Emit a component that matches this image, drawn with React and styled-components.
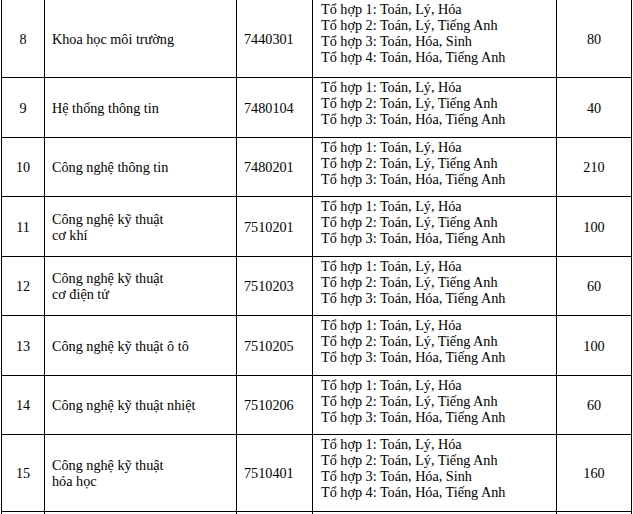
import React from "react";
import styled, { createGlobalStyle } from "styled-components";

const GlobalStyle = createGlobalStyle`
  html, body {
    margin: 0;
    padding: 0;
    background: #fff;
    overflow: hidden;
  }
`;

const combos3 = ["Toán, Lý, Hóa", "Toán, Lý, Tiếng Anh", "Toán, Hóa, Tiếng Anh"];
const combos4 = ["Toán, Lý, Hóa", "Toán, Lý, Tiếng Anh", "Toán, Hóa, Sinh", "Toán, Hóa, Tiếng Anh"];

const rows = [
  { no: 8, name: ["Khoa học môi trường"], code: "7440301", combos: combos4, quota: 80, h: 78 },
  { no: 9, name: ["Hệ thống thông tin"], code: "7480104", combos: combos3, quota: 40, h: 60 },
  { no: 10, name: ["Công nghệ thông tin"], code: "7480201", combos: combos3, quota: 210, h: 59 },
  { no: 11, name: ["Công nghệ kỹ thuật", "cơ khí"], code: "7510201", combos: combos3, quota: 100, h: 60 },
  { no: 12, name: ["Công nghệ kỹ thuật", "cơ điện tử"], code: "7510203", combos: combos3, quota: 60, h: 59 },
  { no: 13, name: ["Công nghệ kỹ thuật ô tô"], code: "7510205", combos: combos3, quota: 100, h: 60 },
  { no: 14, name: ["Công nghệ kỹ thuật nhiệt"], code: "7510206", combos: combos3, quota: 60, h: 59 },
  { no: 15, name: ["Công nghệ kỹ thuật", "hóa học"], code: "7510401", combos: combos4, quota: 160, h: 77 },
];

const Page = styled.div`
  padding-left: 1px;
  margin-top: -1px;
`;

const Table = styled.table`
  border-collapse: collapse;
  table-layout: fixed;
  width: 631px;
  font-family: "Liberation Serif", "Times New Roman", serif;
  font-size: 14.2px;
  line-height: 16px;
  color: #000;
`;

const Row = styled.tr`
  height: ${(p) => p.$h}px;
`;

const Cell = styled.td`
  border: 1px solid #000;
  padding: 0 7px;
  vertical-align: middle;
  text-align: ${(p) => (p.$center ? "center" : "left")};
  white-space: nowrap;
`;

const ComboCell = styled(Cell)`
  vertical-align: top;
  padding: 1px 8px 0;
`;

const Line = styled.div``;

export default function App() {
  return (
    <Page>
      <GlobalStyle />
      <Table>
        <colgroup>
          <col style={{ width: 43 }} />
          <col style={{ width: 192 }} />
          <col style={{ width: 76 }} />
          <col style={{ width: 244 }} />
          <col style={{ width: 75 }} />
        </colgroup>
        <tbody>
          {rows.map((r) => (
            <Row key={r.no} $h={r.h}>
              <Cell $center>{r.no}</Cell>
              <Cell>
                {r.name.map((n) => (
                  <Line key={n}>{n}</Line>
                ))}
              </Cell>
              <Cell>{r.code}</Cell>
              <ComboCell>
                {r.combos.map((c, i) => (
                  <Line key={c}>
                    Tổ hợp {i + 1}: {c}
                  </Line>
                ))}
              </ComboCell>
              <Cell $center>{r.quota}</Cell>
            </Row>
          ))}
          {/* next row starts just at the bottom edge; only its borders show */}
          <Row $h={60}>
            <Cell />
            <Cell />
            <Cell />
            <ComboCell />
            <Cell />
          </Row>
        </tbody>
      </Table>
    </Page>
  );
}
